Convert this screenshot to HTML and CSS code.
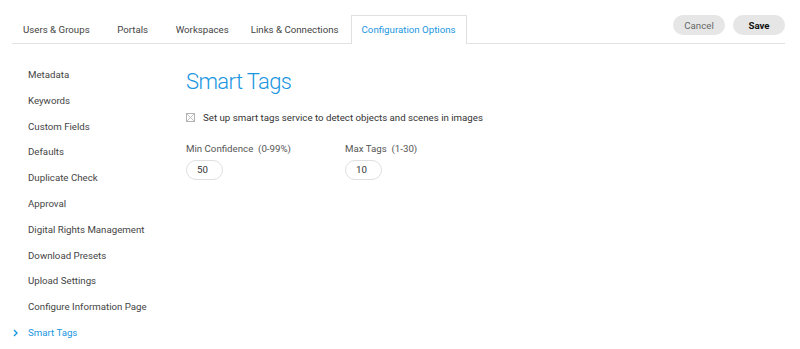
FILE: index.html
```html
<!DOCTYPE html>
<html lang="en">
<head>
    <meta charset="UTF-8">
    <title>Configuration Options</title>
    <link rel="stylesheet" href="styles.css">
</head>
<body>
    <header class="topbar">
        <ul class="tabs">
            <li class="tab">Users &amp; Groups</li>
            <li class="tab">Portals</li>
            <li class="tab">Workspaces</li>
            <li class="tab">Links &amp; Connections</li>
            <li class="tab active">Configuration Options</li>
        </ul>
        <div class="actions">
            <button class="btn">Cancel</button>
            <button class="btn btn-save">Save</button>
        </div>
    </header>

    <div class="page">
        <nav class="sidebar">
            <ul>
                <li>Metadata</li>
                <li>Keywords</li>
                <li>Custom Fields</li>
                <li>Defaults</li>
                <li>Duplicate Check</li>
                <li>Approval</li>
                <li>Digital Rights Management</li>
                <li>Download Presets</li>
                <li>Upload Settings</li>
                <li>Configure Information Page</li>
                <li class="current">
                    <svg class="chevron" width="6" height="8" viewBox="0 0 6 8"><path d="M1 1l3 3-3 3" fill="none" stroke="currentColor" stroke-width="1.4"/></svg>
                    Smart Tags
                </li>
            </ul>
        </nav>

        <main class="content">
            <h1>Smart Tags</h1>
            <label class="check">
                <svg class="checkbox" width="9" height="9" viewBox="0 0 9 9"><rect x="0.5" y="0.5" width="8" height="8" fill="none" stroke="#b3b3b3"/><path d="M1 1l7 7M8 1l-7 7" stroke="#b3b3b3" stroke-width="0.8"/></svg>
                Set up smart tags service to detect objects and scenes in images
            </label>
            <div class="fields">
                <div class="field">
                    <div class="field-label">Min Confidence &nbsp;(0-99%)</div>
                    <div class="pill-input">50</div>
                </div>
                <div class="field">
                    <div class="field-label">Max Tags &nbsp;(1-30)</div>
                    <div class="pill-input">10</div>
                </div>
            </div>
        </main>
    </div>
</body>
</html>
```

FILE: styles.css
```css
/* Config page */
body {
    font-family: Roboto, "Liberation Sans", Arial, sans-serif;
    margin: 0;
    padding: 0;
    background-color: #fff;
    color: #444;
    font-size: 9.7px;
}

ul {
    list-style: none;
    margin: 0;
    padding: 0;
}

.topbar {
    display: flex;
    justify-content: space-between;
    align-items: flex-end;
    margin: 0 15px 0 12px;
    padding-top: 15px;
    border-bottom: 1px solid #e3e3e3;
}

.tabs {
    display: flex;
}

.tab {
    min-width: 42px;
    height: 27px;
    line-height: 27px;
    padding: 0 10px;
    margin-bottom: -1px;
    border: 1px solid transparent;
    border-bottom: none;
    text-align: center;
    color: #444;
    background: #fff;
}

.tab.active {
    margin-left: 1px;
    color: #1a96e0;
    border-color: #e0e0e0;
    padding-bottom: 1px;
}

.actions {
    display: flex;
    align-self: flex-start;
    gap: 8px;
}

.btn {
    font-family: inherit;
    font-size: 9.7px;
    width: 52px;
    height: 20px;
    border: none;
    border-radius: 10px;
    background-color: #e6e6e6;
    color: #666;
    cursor: pointer;
}

.btn-save {
    color: #111;
    font-weight: bold;
}

.page {
    display: flex;
}

.sidebar {
    width: 186px;
    padding-top: 23px;
    flex-shrink: 0;
}

.sidebar li {
    position: relative;
    padding-left: 28px;
    height: 25.8px;
    line-height: 16px;
    color: #444;
}

.sidebar li.current {
    color: #1a96e0;
}

.chevron {
    position: absolute;
    left: 13px;
    top: 4px;
    color: #1a96e0;
}

.content {
    flex: 1;
}

.content h1 {
    margin: 24px 0 0;
    font-size: 22px;
    font-weight: 300;
    letter-spacing: -0.6px;
    color: #1a96e0;
    line-height: 28px;
}

.check {
    display: flex;
    align-items: center;
    gap: 8px;
    margin-top: 16px;
    color: #333;
}

.fields {
    display: flex;
    margin-top: 20px;
}

.field {
    width: 159px;
}

.field-label {
    color: #555;
}

.pill-input {
    margin-top: 6px;
    width: 25px;
    height: 18px;
    line-height: 18px;
    padding-left: 10px;
    border: 1px solid #e0e0e0;
    border-radius: 10px;
    color: #333;
}
```
